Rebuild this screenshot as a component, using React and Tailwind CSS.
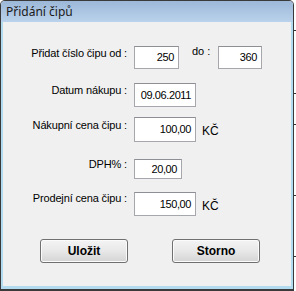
import React from "react";

const Field = ({ value, w, h }) => (
  <div
    className={`flex items-center justify-end bg-white border border-[#a5a7ad] border-t-[#8e8f95] pr-[4px] text-[11px] leading-[13px] tracking-[-0.4px] text-black ${w} ${h}`}
  >
    {value}
  </div>
);

const Button = ({ children }) => (
  <button className="w-[88px] h-[24px] rounded-[3px] border border-[#707070] bg-gradient-to-b from-[#f4f4f4] via-[#e8e8e8] to-[#d4d4d4] text-[12px] font-bold text-black shadow-[inset_0_0_0_1px_#fbfbfb]">
    {children}
  </button>
);

const Label = ({ children, className }) => (
  <div className={`w-[124px] text-right text-[11px] leading-[13px] tracking-[-0.15px] text-black ${className}`}>
    {children}
  </div>
);

const App = () => {
  return (
    <div
      className="w-[296px] h-[291px] flex bg-white overflow-hidden"
      style={{ fontFamily: '"Liberation Sans", Arial, sans-serif' }}
    >
      <div className="w-[294px] h-[291px] flex flex-col border-l border-r border-t border-b-2 border-[#3a3a3a] rounded-t-[5px] overflow-hidden">
        {/* title bar */}
        <div className="h-[21px] shrink-0 flex items-center pl-[5px] bg-gradient-to-b from-[#9cb8d8] to-[#bad2eb] text-[12px] text-[#1a1a1a]" style={{ fontFamily: '"Noto Sans", sans-serif' }}>
          Přidání čipů
        </div>

        {/* body */}
        <div className="flex-1 flex flex-col bg-[#f0f0f0] border-l-2 border-r-2 border-b-[3px] border-[#b3dbef]">
          {/* row 1 */}
          <div className="flex mt-[24px] h-[23px]">
            <Label className="mt-[1px]">Přidat číslo čipu od :</Label>
            <div className="ml-[7px]">
              <Field value="250" w="w-[45px]" h="h-[23px]" />
            </div>
            <div className="ml-[13px] text-[11px] leading-[13px] -mt-[1px] w-[26px]">do :</div>
            <Field value="360" w="w-[44px]" h="h-[23px]" />
          </div>

          {/* row 2 */}
          <div className="flex mt-[14px] h-[24px]">
            <Label className="mt-[1px]">Datum nákupu :</Label>
            <div className="ml-[7px]">
              <Field value="09.06.2011" w="w-[62px]" h="h-[24px]" />
            </div>
          </div>

          {/* row 3 */}
          <div className="flex mt-[10px] h-[25px]">
            <Label className="mt-[2px]">Nákupní cena čipu :</Label>
            <div className="ml-[7px]">
              <Field value="100,00" w="w-[62px]" h="h-[25px]" />
            </div>
            <div className="ml-[6px] self-center text-[12px] leading-[14px] mt-[3px]">KČ</div>
          </div>

          {/* row 4 */}
          <div className="flex mt-[17px] h-[20px]">
            <Label className="-mt-[1px]">DPH% :</Label>
            <div className="ml-[7px]">
              <Field value="20,00" w="w-[48px]" h="h-[20px]" />
            </div>
          </div>

          {/* row 5 */}
          <div className="flex mt-[13px] h-[24px]">
            <Label>Prodejní cena čipu :</Label>
            <div className="ml-[7px]">
              <Field value="150,00" w="w-[62px]" h="h-[24px]" />
            </div>
            <div className="ml-[6px] self-center text-[12px] leading-[14px] mt-[3px]">KČ</div>
          </div>

          {/* buttons */}
          <div className="flex mt-[23px] pl-[37px] gap-[44px]">
            <Button>Uložit</Button>
            <Button>Storno</Button>
          </div>
        </div>
      </div>
      <div className="w-[2px] h-full flex flex-col">
        <div className="h-[30px]" />
        <div className="h-[1px] bg-[#333]" />
        <div className="h-[62px]" />
        <div className="h-[1px] bg-[#333]" />
        <div className="h-[30px]" />
        <div className="h-[1px] bg-[#333]" />
        <div className="h-[70px]" />
        <div className="h-[1px] bg-[#333]" />
        <div className="h-[60px]" />
        <div className="h-[1px] bg-[#333]" />
      </div>
    </div>
  );
};

export default App;
